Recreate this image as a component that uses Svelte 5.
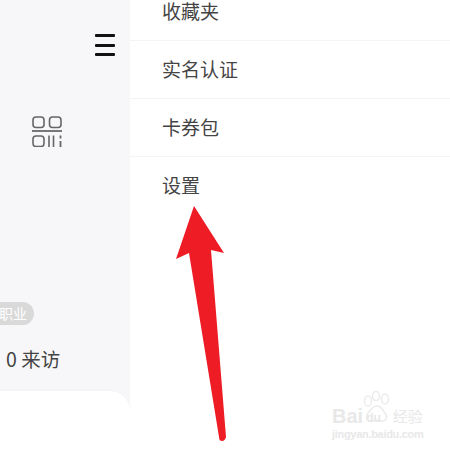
<script>
  const items = ['收藏夹', '实名认证', '卡券包', '设置'];
</script>

<div class="screen">
  <aside class="side">
    <button class="menu" aria-label="菜单"><span></span><span></span><span></span></button>
    <svg class="scan" viewBox="0 0 30 31" width="30" height="31" fill="none" stroke="#666" stroke-width="1.6">
      <rect x="1" y="1" width="11" height="10.500" rx="3" />
      <rect x="17.500" y="1" width="11.500" height="10.500" rx="3" />
      <rect x="0" y="14" width="30" height="2" fill="#777" stroke="none" />
      <rect x="1" y="20" width="11" height="10.500" rx="3" />
      <path d="M17 19.500v11.500M21.500 19.500v11.500" />
      <path d="M28.500 19.500v3M28.500 25v6" stroke-width="1.800" />
    </svg>
    <div class="tag">职业</div>
    <div class="visits">0 来访</div>
    <div class="card"></div>
  </aside>

  <main class="drawer">
    <ul>
      {#each items as item}
        <li>{item}</li>
      {/each}
    </ul>
  </main>

  <svg class="arrow" viewBox="0 0 450 450" width="450" height="450">
    <path
      d="M194 206L224 253L211 250L226 437Q225 441 222 441Q219 441 219 437L189 253L176 259Z"
      fill="#ee1c25"
    />
  </svg>

  <div class="mark">
    <div class="brand">
      <span class="bai">Bai</span>
      <svg class="paw" viewBox="0 0 32 36" width="32" height="36" fill="none" stroke="#ececec" stroke-width="1.6">
        <ellipse cx="7" cy="10" rx="3.500" ry="5" />
        <ellipse cx="15" cy="5" rx="3.500" ry="4.500" />
        <ellipse cx="24" cy="8" rx="3.500" ry="5" />
        <path d="M16 15c-5 0-6 4-9 7-3 4-1 9 4 8 3-1 6-1 9 0 5 1 7-4 4-8-3-3-3-7-8-7z" />
      </svg>
      <span class="du">du</span>
      <span class="jy">经验</span>
    </div>
    <div class="url">jingyan.baidu.com</div>
  </div>
</div>

<style>
  :global(body) { margin: 0; }
  .screen {
    position: relative;
    display: flex;
    width: 450px;
    height: 450px;
    overflow: hidden;
    background: #fff;
    font-family: "Noto Sans CJK SC", "Noto Sans", sans-serif;
  }
  .side {
    display: flex;
    flex-direction: column;
    align-items: flex-start;
    box-sizing: border-box;
    width: 130px;
    flex: none;
    background: #f7f7fa;
  }
  .menu {
    display: flex;
    flex-direction: column;
    gap: 6.500px;
    align-self: flex-end;
    width: 20px;
    margin: 34px 15px 0 0;
    padding: 0;
    border: 0;
    background: none;
  }
  .menu span { height: 3px; background: #111; border-radius: 1px; }
  .scan { margin: 60px 0 0 32px; }
  .tag {
    margin: 155px 0 0 -10px;
    height: 23px;
    line-height: 23px;
    padding: 0 7px 0 9px;
    border-radius: 12px;
    background: #d9d9d9;
    color: #fff;
    font-size: 14px;
  }
  .visits {
    margin: 20px 0 0 6px;
    font-size: 19.500px;
    line-height: 28px;
    color: #444;
  }
  .card {
    align-self: stretch;
    flex: 1;
    margin-top: 18px;
    background: #fff;
    border-top-right-radius: 20px;
    box-shadow: 0 -1px 2px rgba(0, 0, 0, 0.02);
  }
  .drawer { flex: 1; }
  ul { list-style: none; margin: -17px 0 0; padding: 0; }
  li {
    box-sizing: border-box;
    height: 58px;
    line-height: 55px;
    padding-left: 32px;
    border-bottom: 1px solid #f4f4f4;
    color: #444;
    font-size: 19px;
  }
  li:last-child { border-bottom: 0; }
  .arrow { position: absolute; left: 0; top: 0; pointer-events: none; }
  .mark {
    position: absolute;
    left: 332px;
    top: 391px;
    color: #e8e8e8;
    font-family: "Liberation Sans", sans-serif;
  }
  .brand { display: flex; align-items: flex-end; height: 36px; font-size: 20px; font-weight: 700; line-height: 22px; }
  .paw { margin: 0 -27px 0 -2px; }
  .du { font-size: 12px; line-height: 18px; margin-right: 12px; }
  .jy { font-family: "Noto Sans CJK SC", sans-serif; font-size: 15px; font-weight: 400; }
  .url { font-size: 11px; line-height: 14px; font-weight: 700; letter-spacing: -0.3px; }
</style>
